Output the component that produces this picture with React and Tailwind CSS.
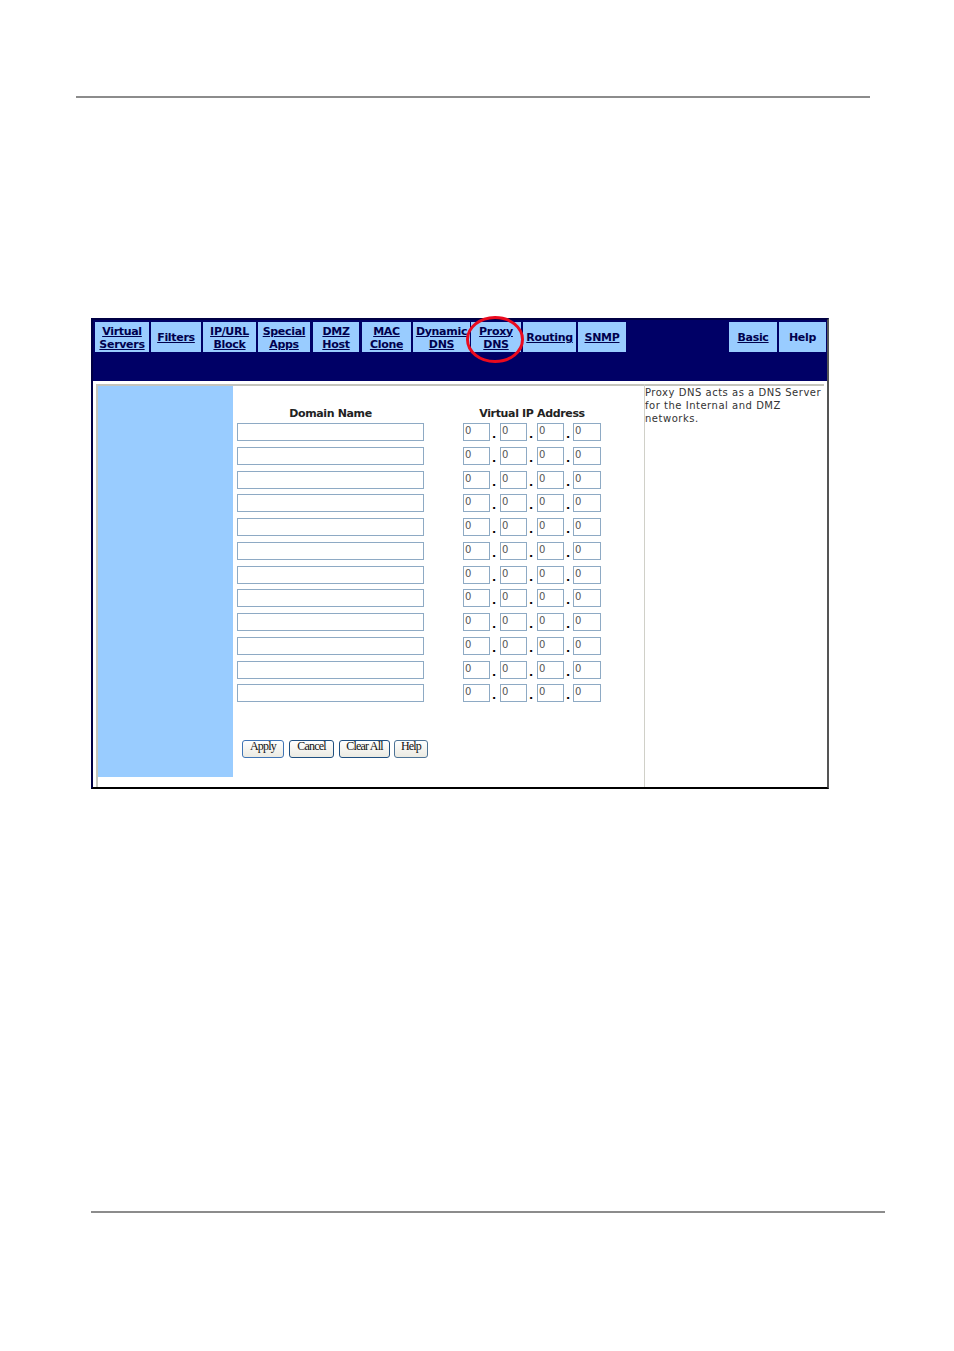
const tabs = [
  { a: "Virtual", b: "Servers", c: "ml-[2px] w-[54px]" },
  { a: "Filters", c: "ml-[2px] w-[50px]" },
  { a: "IP/URL", b: "Block", c: "ml-[2px] w-[53px]" },
  { a: "Special", b: "Apps", c: "ml-[2px] w-[52px]" },
  { a: "DMZ", b: "Host", c: "ml-[3px] w-[46px]" },
  { a: "MAC", b: "Clone", c: "ml-[3px] w-[49px]" },
  { a: "Dynamic", b: "DNS", c: "ml-[2px] w-[57px]" },
  { a: "Proxy", b: "DNS", c: "ml-[1px] w-[50px]" },
  { a: "Routing", c: "ml-[2px] w-[53px]" },
  { a: "SNMP", c: "ml-[2px] w-[48px]" },
  { a: "Basic", c: "ml-[103px] w-[48px]" },
  { a: "Help", c: "ml-[2px] w-[47px]", plain: true },
];

const rows = Array.from({ length: 12 }, (_, i) => i);
const octets = [
  "w-[27px]",
  "ml-[10px] w-[27px]",
  "ml-[10px] w-[27px]",
  "ml-[9px] w-[28px]",
];
const buttons = [
  { t: "Apply", c: "w-[42px] border-[#3f74b5]" },
  { t: "Cancel", c: "ml-[5px] w-[45px] border-[#1f4f80]" },
  { t: "Clear All", c: "ml-[5px] w-[51px] border-[#1f4f80]" },
  { t: "Help", c: "ml-[4px] w-[34px] border-[#4d7396]" },
];

function Tab({ t }) {
  return (
    <div
      className={`${t.c} h-[30px] pt-[1px] bg-[#99ccff] flex flex-col items-center justify-center text-[11px] leading-[13px] font-bold tracking-[-0.3px] text-[#00004d] whitespace-nowrap`}
    >
      <span className={t.plain ? "" : "underline"}>{t.a}</span>
      {t.b && <span className="underline">{t.b}</span>}
    </div>
  );
}

export default function App() {
  return (
    <div className="relative w-[954px] h-[1351px] bg-white overflow-hidden font-['DejaVu_Sans',sans-serif] pt-[96px]">
      <div className="ml-[76px] w-[794px] h-[2px] bg-[#8c8c8c]" />
      <div className="ml-[91px] mt-[220px] w-[738px] h-[471px] border-l-2 border-t-2 border-[#000044] border-b-2 border-b-black border-r-2 border-r-[#555555] flex flex-col">
        <div className="h-[61px] shrink-0 bg-[#000066] flex items-start pt-[2px]">
          {tabs.map((t) => (
            <Tab key={t.a + (t.b || "")} t={t} />
          ))}
        </div>
        <div className="flex-1 flex bg-white min-h-0">
          <div className="w-[551px] shrink-0 pl-[3px] pt-[3px]">
            <div className="h-full border-l-2 border-t-2 border-[#c4c4bc] flex items-start">
              <div className="w-[135px] h-[391px] bg-[#99ccff] shrink-0" />
              <div className="pl-[4px] flex-1">
                <div className="flex h-[37px] items-end pb-[2px] text-[11px] font-bold leading-[14px] tracking-[-0.35px] text-[#222222]">
                  <div className="w-[187px] text-center">Domain Name</div>
                  <div className="ml-[39px] w-[138px] text-center">Virtual IP Address</div>
                </div>
                <div className="flex flex-col gap-[5.75px]">
                  {rows.map((r) => (
                    <div key={r} className="flex h-[18px]">
                      <div className="w-[187px] h-full border border-[#8eaac4] bg-white" />
                      <div className="ml-[39px] flex relative">
                        {octets.map((o, i) => (
                          <div key={i} className={`${o} h-full border border-[#8eaac4] bg-white pl-[1px] text-[10px] leading-[14px] text-[#555555] relative`}>
                            0
                            {i < 3 && (
                              <span className="absolute top-[4px] left-[28px] text-[11px] font-bold leading-[14px] text-black">.</span>
                            )}
                          </div>
                        ))}
                      </div>
                    </div>
                  ))}
                </div>
                <div className="flex mt-[38px] ml-[5px] font-['Liberation_Serif',serif] text-[12px] tracking-[-0.8px] text-[#111111]">
                  {buttons.map((b) => (
                    <button key={b.t} className={`${b.c} h-[18px] border rounded-[3px] bg-linear-to-b from-white to-[#ebeae2] leading-[11px] pb-[5px] text-center`}>
                      {b.t}
                    </button>
                  ))}
                </div>
              </div>
            </div>
          </div>
          <div className="flex-1 border-l border-[#d0d0c8] mt-[3px] relative">
            <div className="mr-[3px] border-t-2 border-[#c4c4bc] text-[10px] leading-[13px] tracking-[0.52px] text-[#333333] whitespace-nowrap">
              Proxy DNS acts as a DNS Server
              <br />
              for the Internal and DMZ
              <br />
              networks.
            </div>
          </div>
        </div>
      </div>
      <div className="ml-[91px] mt-[422px] w-[794px] h-[2px] bg-[#8c8c8c]" />
      <svg className="absolute left-[465px] top-[315px]" width="60" height="49" viewBox="0 0 60 49">
        <ellipse cx="30" cy="24.5" rx="27.5" ry="22" fill="none" stroke="#ea0a1e" strokeWidth="3" />
      </svg>
    </div>
  );
}
